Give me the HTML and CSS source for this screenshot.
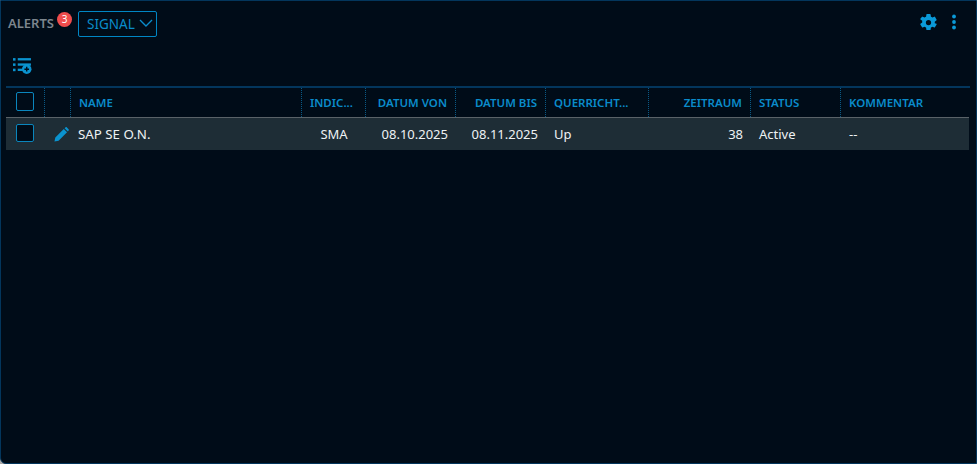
FILE: index.html
```html
<!DOCTYPE html>
<html lang="de">
<head>
<meta charset="utf-8">
<title>Alerts</title>
<link rel="stylesheet" href="styles.css">
</head>
<body>
<div class="panel">
  <header class="top">
    <div class="title-group">
      <span class="title">ALERTS</span>
      <span class="badge">3</span>
      <button class="select">SIGNAL
        <svg class="chev" viewBox="0 0 14 8" width="14" height="8"><path d="M1 1l6 6 6-6" fill="none" stroke="currentColor" stroke-width="1.4"/></svg>
      </button>
    </div>
    <div class="top-icons">
      <svg class="gear" viewBox="0 0 24 24" width="21" height="21"><path fill="currentColor" d="M19.14 12.94a7.5 7.5 0 0 0 0-1.88l2.03-1.58a.5.5 0 0 0 .12-.64l-1.92-3.32a.5.5 0 0 0-.6-.22l-2.39.96a7 7 0 0 0-1.62-.94l-.36-2.54a.5.5 0 0 0-.5-.42h-3.84a.5.5 0 0 0-.48.42l-.36 2.54c-.59.24-1.13.56-1.62.94l-2.39-.96a.5.5 0 0 0-.6.22L2.69 7.84a.5.5 0 0 0 .12.64l2.03 1.58a7.6 7.6 0 0 0 0 1.88l-2.03 1.58a.5.5 0 0 0-.12.64l1.92 3.32c.13.22.39.3.6.22l2.39-.96c.5.38 1.03.7 1.62.94l.36 2.54c.05.24.24.42.48.42h3.84c.24 0 .44-.18.48-.42l.36-2.54c.59-.24 1.13-.56 1.62-.94l2.39.96c.22.08.47 0 .6-.22l1.92-3.32a.5.5 0 0 0-.12-.64zM12 15a3 3 0 1 1 0-6 3 3 0 0 1 0 6z"/></svg>
      <svg class="dots" viewBox="0 0 4 16" width="4" height="16"><circle cx="2" cy="2.5" r="1.9" fill="currentColor"/><circle cx="2" cy="8" r="1.9" fill="currentColor"/><circle cx="2" cy="13.5" r="1.9" fill="currentColor"/></svg>
    </div>
  </header>
  <div class="toolbar">
    <svg class="list-add" viewBox="0 0 18 16" width="19" height="17">
      <g fill="currentColor">
        <rect x="0" y="1" width="2.4" height="2.4"/><rect x="0" y="6" width="2.4" height="2.4"/><rect x="0" y="11" width="2.4" height="2.4"/>
        <rect x="4.5" y="1" width="12.5" height="2.2"/><rect x="4.5" y="6" width="12.5" height="2.2"/><rect x="4.5" y="11" width="5" height="2.2"/>
        <circle cx="13" cy="11.5" r="4.5"/>
      </g>
      <path d="M13 9.3v4.4M10.8 11.5h4.4" stroke="#000c18" stroke-width="1.3"/>
    </svg>
  </div>
  <div class="table">
    <div class="row head">
      <div class="cell"><span class="check"></span></div>
      <div class="cell"></div>
      <div class="cell">NAME</div>
      <div class="cell">INDIC...</div>
      <div class="cell right">DATUM VON</div>
      <div class="cell right">DATUM BIS</div>
      <div class="cell">QUERRICHT...</div>
      <div class="cell right">ZEITRAUM</div>
      <div class="cell">STATUS</div>
      <div class="cell">KOMMENTAR</div>
    </div>
    <div class="row body">
      <div class="cell"><span class="check"></span></div>
      <div class="cell pencil-cell">
        <svg class="pencil" viewBox="0 0 16 16" width="15" height="15"><path fill="currentColor" d="M0.5 15.5l.9-4.4L10.4 2.1l3.5 3.5-9 9zM11.3 1.2l.9-.8c.5-.4 1.1-.4 1.5 0l1.9 1.9c.4.4.4 1 0 1.5l-.8.9z"/></svg>
      </div>
      <div class="cell name">SAP SE O.N.</div>
      <div class="cell center">SMA</div>
      <div class="cell right">08.10.2025</div>
      <div class="cell right">08.11.2025</div>
      <div class="cell">Up</div>
      <div class="cell right">38</div>
      <div class="cell">Active</div>
      <div class="cell">--</div>
    </div>
  </div>
</div>
</body>
</html>
```
FILE: styles.css
```css
* { box-sizing: border-box; }
html, body { margin: 0; height: 100%; background: #a9a9a9; }
body { font-family: "Noto Sans", "Liberation Sans", sans-serif; overflow: hidden; }
.panel {
  width: 977px;
  height: 464px;
  background: #000c18;
  border: 1px solid #03365c;
  border-radius: 0 0 0 6px;
  padding: 0 7px 0 5px;
  display: flex;
  flex-direction: column;
}
.top {
  height: 44px;
  display: flex;
  justify-content: space-between;
  align-items: center;
  padding: 2px 0 0 2px;
}
.title-group { display: flex; align-items: center; }
.title { font-size: 13px; font-weight: 600; color: #7d868e; margin-top: -2px; }
.badge {
  width: 15px; height: 15px;
  border-radius: 50%;
  background: #f04c4c;
  color: #fff;
  font-size: 10px;
  line-height: 15px;
  text-align: center;
  margin: -10px 0 0 3px;
}
.select {
  margin-left: 6px;
  height: 26px;
  width: 79px;
  padding: 0 3px 0 8px;
  display: flex;
  align-items: center;
  justify-content: space-between;
  background: transparent;
  border: 1px solid #0086c4;
  border-radius: 2px;
  color: #0a8ccb;
  font: 13.5px "Noto Sans", sans-serif;
}
.chev { flex: none; margin-top: -2px; }
.top-icons { display: flex; align-items: center; gap: 13px; color: #0a9ad8; padding-right: 13px; margin-top: -4px; }
.gear, .dots { display: block; }
.toolbar { height: 42px; padding: 12px 0 0 7px; color: #0a93cf; }
.list-add { display: block; }
.table { border-top: 2px solid #03365c; margin-top: -1px; margin-right: -1px; }
.row {
  display: grid;
  grid-template-columns: 38px 26px 231px 64px 90px 90px 103px 102px 90px 129px;
  width: 963px;
}
.head { height: 30px; border-bottom: 1px solid #5a6268; color: #0a8bca; font-size: 11.5px; font-weight: 600; }
.head .cell + .cell { border-left: 1px dotted #0a5a86; }
.head .check { margin-top: -3px; height: 19px; }
.body { height: 32px; background: #1e2d36; color: #eef2f4; font-size: 13px; }
.body .cell { padding: 0 7px 0 9px; }
.body .name { font-size: 13.3px; padding-left: 8px; }
.body .check { height: 18px; margin-top: -3px; }
.cell { display: flex; align-items: center; padding: 0 8px; white-space: nowrap; min-width: 0; }
.cell:first-child, .body .cell:first-child { padding-left: 10px; }
.right { justify-content: flex-end; }
.center { justify-content: center; }
.check {
  width: 18px;
  background: #000c18;
  border: 1px solid #0a86bd;
  border-radius: 2px;
  display: block;
}
.pencil-cell { color: #0a93cf; padding-left: 10px !important; }
.pencil { flex: none; }
```
